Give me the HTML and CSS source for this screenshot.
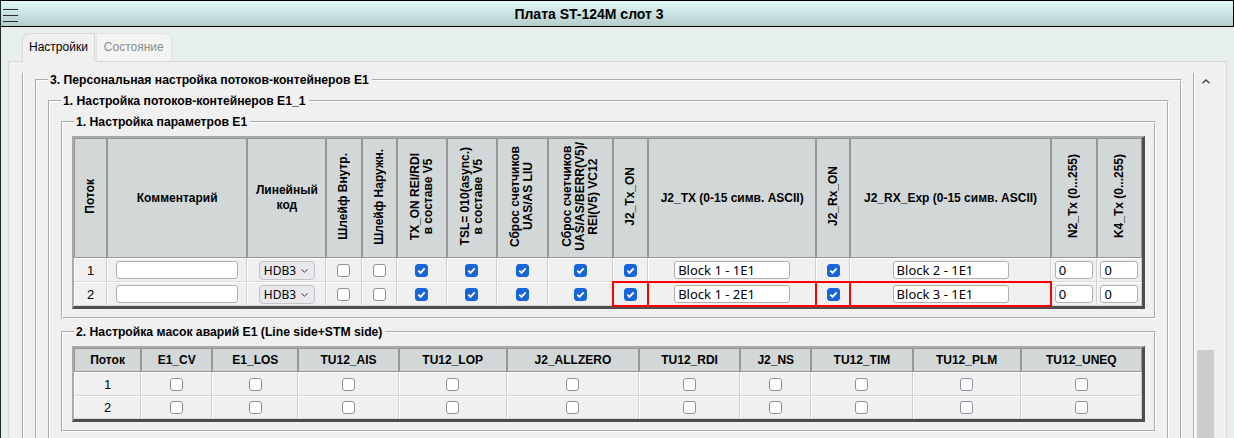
FILE: index.html
```html
<!DOCTYPE html>
<html lang="ru">
<head>
    <meta charset="UTF-8">
    <title>Плата ST-124M слот 3</title>
    <link rel="stylesheet" href="styles.css">
</head>
<body>
    <div class="window">
        <div class="titlebar">
            <svg class="menu" width="19" height="25" viewBox="0 0 19 25">
                <path d="M2 8.5H17M2 14.5H17M2 20.5H17" stroke="#2b2b2b" stroke-width="1.2"/>
            </svg>
            <span class="title">Плата ST-124M слот 3</span>
        </div>

        <div class="tabs">
            <div class="tab active">Настройки</div>
            <div class="tab">Состояние</div>
        </div>

        <div class="panel">
            <div class="scroll">
                <div class="frame">
                    <fieldset>
                        <legend>3. Персональная настройка потоков-контейнеров E1</legend>
                        <fieldset>
                            <legend>1. Настройка потоков-контейнеров E1_1</legend>

                            <fieldset>
                                <legend>1. Настройка параметров E1</legend>
                                <table class="grid params">
                                    <colgroup>
                                        <col class="c-num"><col class="c-comment"><col class="c-code">
                                        <col class="c-35"><col class="c-35"><col class="c-50"><col class="c-50">
                                        <col class="c-51"><col class="c-65"><col class="c-35"><col class="c-j2tx">
                                        <col class="c-34"><col class="c-j2rx"><col class="c-46"><col class="c-45">
                                    </colgroup>
                                    <thead>
                                        <tr>
                                            <th><span class="vt">Поток</span></th>
                                            <th>Комментарий</th>
                                            <th class="lines">Линейный<br>код</th>
                                            <th><span class="vt">Шлейф Внутр.</span></th>
                                            <th><span class="vt">Шлейф Наружн.</span></th>
                                            <th><span class="vt">TX_ON REI/RDI<br>в составе V5</span></th>
                                            <th><span class="vt">TSL= 010(async.)<br>в составе V5</span></th>
                                            <th><span class="vt">Сброс счетчиков<br>UAS/AS LIU</span></th>
                                            <th><span class="vt">Сброс счетчиков<br>UAS/AS/BERR(V5)/<br>REI(V5) VC12</span></th>
                                            <th><span class="vt">J2_Tx_ON</span></th>
                                            <th>J2_TX (0-15 симв. ASCII)</th>
                                            <th><span class="vt">J2_Rx_ON</span></th>
                                            <th>J2_RX_Exp (0-15 симв. ASCII)</th>
                                            <th><span class="vt">N2_Tx (0...255)</span></th>
                                            <th><span class="vt">K4_Tx (0...255)</span></th>
                                        </tr>
                                    </thead>
                                    <tbody>
                                        <tr>
                                            <td>1</td>
                                            <td><input class="field comment" type="text" value=""></td>
                                            <td><span class="select"><select><option>HDB3</option></select><svg class="chev" width="7" height="4" viewBox="0 0 7 4"><path d="M0.5 0.5L3.5 3.2L6.5 0.5" fill="none" stroke="#333" stroke-width="1"/></svg></span></td>
                                            <td><span class="cb"></span></td>
                                            <td><span class="cb"></span></td>
                                            <td><span class="cb on"><svg width="11" height="11" viewBox="0 0 11 11"><path d="M2.3 5.6L4.5 7.8L8.7 3.3" fill="none" stroke="#fff" stroke-width="1.9"/></svg></span></td>
                                            <td><span class="cb on"><svg width="11" height="11" viewBox="0 0 11 11"><path d="M2.3 5.6L4.5 7.8L8.7 3.3" fill="none" stroke="#fff" stroke-width="1.9"/></svg></span></td>
                                            <td><span class="cb on"><svg width="11" height="11" viewBox="0 0 11 11"><path d="M2.3 5.6L4.5 7.8L8.7 3.3" fill="none" stroke="#fff" stroke-width="1.9"/></svg></span></td>
                                            <td><span class="cb on"><svg width="11" height="11" viewBox="0 0 11 11"><path d="M2.3 5.6L4.5 7.8L8.7 3.3" fill="none" stroke="#fff" stroke-width="1.9"/></svg></span></td>
                                            <td><span class="cb on"><svg width="11" height="11" viewBox="0 0 11 11"><path d="M2.3 5.6L4.5 7.8L8.7 3.3" fill="none" stroke="#fff" stroke-width="1.9"/></svg></span></td>
                                            <td><input class="field trace" type="text" value="Block 1 - 1E1"></td>
                                            <td><span class="cb on"><svg width="11" height="11" viewBox="0 0 11 11"><path d="M2.3 5.6L4.5 7.8L8.7 3.3" fill="none" stroke="#fff" stroke-width="1.9"/></svg></span></td>
                                            <td><input class="field trace" type="text" value="Block 2 - 1E1"></td>
                                            <td><input class="field byte" type="text" value="0"></td>
                                            <td><input class="field byte" type="text" value="0"></td>
                                        </tr>
                                        <tr>
                                            <td>2</td>
                                            <td><input class="field comment" type="text" value=""></td>
                                            <td><span class="select"><select><option>HDB3</option></select><svg class="chev" width="7" height="4" viewBox="0 0 7 4"><path d="M0.5 0.5L3.5 3.2L6.5 0.5" fill="none" stroke="#333" stroke-width="1"/></svg></span></td>
                                            <td><span class="cb"></span></td>
                                            <td><span class="cb"></span></td>
                                            <td><span class="cb on"><svg width="11" height="11" viewBox="0 0 11 11"><path d="M2.3 5.6L4.5 7.8L8.7 3.3" fill="none" stroke="#fff" stroke-width="1.9"/></svg></span></td>
                                            <td><span class="cb on"><svg width="11" height="11" viewBox="0 0 11 11"><path d="M2.3 5.6L4.5 7.8L8.7 3.3" fill="none" stroke="#fff" stroke-width="1.9"/></svg></span></td>
                                            <td><span class="cb on"><svg width="11" height="11" viewBox="0 0 11 11"><path d="M2.3 5.6L4.5 7.8L8.7 3.3" fill="none" stroke="#fff" stroke-width="1.9"/></svg></span></td>
                                            <td><span class="cb on"><svg width="11" height="11" viewBox="0 0 11 11"><path d="M2.3 5.6L4.5 7.8L8.7 3.3" fill="none" stroke="#fff" stroke-width="1.9"/></svg></span></td>
                                            <td class="alert"><span class="cb on"><svg width="11" height="11" viewBox="0 0 11 11"><path d="M2.3 5.6L4.5 7.8L8.7 3.3" fill="none" stroke="#fff" stroke-width="1.9"/></svg></span></td>
                                            <td class="alert"><input class="field trace" type="text" value="Block 1 - 2E1"></td>
                                            <td class="alert"><span class="cb on"><svg width="11" height="11" viewBox="0 0 11 11"><path d="M2.3 5.6L4.5 7.8L8.7 3.3" fill="none" stroke="#fff" stroke-width="1.9"/></svg></span></td>
                                            <td class="alert"><input class="field trace" type="text" value="Block 3 - 1E1"></td>
                                            <td><input class="field byte" type="text" value="0"></td>
                                            <td><input class="field byte" type="text" value="0"></td>
                                        </tr>
                                    </tbody>
                                </table>
                            </fieldset>

                            <fieldset class="masks">
                                <legend>2. Настройка масок аварий E1 (Line side+STM side)</legend>
                                <table class="grid alarms">
                                    <colgroup>
                                        <col class="a-num"><col class="a-71"><col class="a-86"><col class="a-100">
                                        <col class="a-108"><col class="a-132"><col class="a-101"><col class="a-71">
                                        <col class="a-101"><col class="a-108"><col class="a-121">
                                    </colgroup>
                                    <thead>
                                        <tr>
                                            <th>Поток</th>
                                            <th>E1_CV</th>
                                            <th>E1_LOS</th>
                                            <th>TU12_AIS</th>
                                            <th>TU12_LOP</th>
                                            <th>J2_ALLZERO</th>
                                            <th>TU12_RDI</th>
                                            <th>J2_NS</th>
                                            <th>TU12_TIM</th>
                                            <th>TU12_PLM</th>
                                            <th>TU12_UNEQ</th>
                                        </tr>
                                    </thead>
                                    <tbody>
                                        <tr>
                                            <td>1</td>
                                            <td><span class="cb"></span></td>
                                            <td><span class="cb"></span></td>
                                            <td><span class="cb"></span></td>
                                            <td><span class="cb"></span></td>
                                            <td><span class="cb"></span></td>
                                            <td><span class="cb"></span></td>
                                            <td><span class="cb"></span></td>
                                            <td><span class="cb"></span></td>
                                            <td><span class="cb"></span></td>
                                            <td><span class="cb"></span></td>
                                        </tr>
                                        <tr class="short">
                                            <td>2</td>
                                            <td><span class="cb"></span></td>
                                            <td><span class="cb"></span></td>
                                            <td><span class="cb"></span></td>
                                            <td><span class="cb"></span></td>
                                            <td><span class="cb"></span></td>
                                            <td><span class="cb"></span></td>
                                            <td><span class="cb"></span></td>
                                            <td><span class="cb"></span></td>
                                            <td><span class="cb"></span></td>
                                            <td><span class="cb"></span></td>
                                        </tr>
                                    </tbody>
                                </table>
                            </fieldset>
                        </fieldset>
                    </fieldset>
                </div>

                <div class="scrollbar">
                    <svg class="up" width="18" height="5" viewBox="0 0 18 5">
                        <path d="M5.5 4.3L9 1L12.5 4.3" fill="none" stroke="#444" stroke-width="1.4"/>
                    </svg>
                    <div class="thumb"></div>
                </div>
            </div>
        </div>
    </div>
</body>
</html>
```

FILE: styles.css
```css
* {
    box-sizing: border-box;
}
body {
    margin: 0;
    font-family: "Liberation Sans", Arial, sans-serif;
    font-size: 12px;
    color: #000;
    background: #e7efed;
    overflow: hidden;
}
.window {
    height: 438px;
    border-left: 1px solid #1d2a2a;
    display: flex;
    flex-direction: column;
}

/* title bar */
.titlebar {
    height: 27px;
    flex: none;
    display: flex;
    align-items: center;
    border-top: 1px solid #000;
    border-bottom: 1px solid #000;
    border-right: 1px solid #000;
    background: linear-gradient(#e1f8f8, #b5cccc);
}
.menu {
    display: block;
    flex: none;
}
.title {
    flex: 1;
    text-align: center;
    font-weight: bold;
    font-size: 14px;
    padding-right: 75px;
}

/* tabs */
.tabs {
    height: 34px;
    flex: none;
    display: flex;
    padding: 6px 0 0 21px;
}
.tab {
    height: 28px;
    line-height: 27px;
    padding: 0 7px;
    border: 1px solid #e2e2e2;
    border-bottom: none;
    border-radius: 0 8px 0 0;
    background: #f4f4f4;
    color: #8c8c8c;
    margin-left: 1px;
}
.tab.active {
    padding: 0 6px;
    margin-left: 0;
    border-color: #d8d8d8;
    border-radius: 8px 0 0 0;
    background: #f0f0f0;
    color: #000;
    position: relative;
    z-index: 1;
    height: 29px;
    margin-bottom: -1px;
}

/* panel with scroll area */
.panel {
    flex: 1;
    min-height: 0;
    margin: 0 7px;
    padding: 11px 11px 0 11px;
    border: 1px solid #d8d8d8;
    border-bottom: none;
    background: #f0f0f0;
}
.scroll {
    height: 100%;
    display: flex;
    overflow: hidden;
}
.frame {
    flex: 1;
    margin: 0 2px;
    padding: 0 9px;
    border-left: 2px groove #fff;
    border-right: 2px groove #fff;
}
.scrollbar {
    width: 18px;
    flex: none;
}
.up {
    display: block;
    margin-top: 6px;
}
.thumb {
    width: 17px;
    height: 120px;
    margin-top: 266px;
    background: #cdcdcd;
}

fieldset {
    margin: 0 2px;
    padding: 7px 9px 8px;
    border: 2px groove #fff;
    min-width: 0;
}
legend {
    margin-left: 2px;
    padding: 0 3px 0 2px;
    font-weight: bold;
    font-size: 12.2px;
    line-height: 14px;
}
.masks {
    margin-top: 6px;
}

/* tables */
.grid {
    width: 100%;
    table-layout: fixed;
    border-collapse: separate;
    border-spacing: 0;
    border-top: 2px solid #a9a9a9;
    border-left: 2px solid #a9a9a9;
    border-right: 3px solid #4e4e4e;
    border-bottom: 3px solid #4e4e4e;
}
.grid th {
    padding: 0;
    background: #d2d8d8;
    border: 1px solid #979797;
    font-weight: bold;
    text-align: center;
    vertical-align: middle;
}
.grid td {
    padding: 0;
    height: 24px;
    background: #f0f0f0;
    border-top: 1px solid #fff;
    border-left: 1px solid #fff;
    border-right: 1px solid #cfcfcf;
    border-bottom: 1px solid #d8d8d8;
    text-align: center;
    vertical-align: middle;
    font-size: 13px;
}
.params th {
    height: 120px;
}
.lines {
    line-height: 15px;
}
.alarms th {
    height: 24px;
}
.alarms .short td {
    height: 23px;
}
.grid td.alert {
    outline: 2px solid #f00;
    outline-offset: -1px;
}

.vt {
    display: inline-block;
    writing-mode: vertical-rl;
    transform: rotate(180deg);
    line-height: 13px;
    text-align: center;
    white-space: nowrap;
}

.c-num { width: 33px; }
.c-comment { width: 140px; }
.c-code { width: 79px; }
.c-35 { width: 35px; }
.c-34 { width: 34px; }
.c-50 { width: 50px; }
.c-51 { width: 51px; }
.c-65 { width: 65px; }
.c-46 { width: 46px; }
.c-45 { width: 45px; }
.c-j2tx { width: 168px; }
.c-j2rx { width: 200px; }

.a-num { width: 67px; }
.a-71 { width: 71px; }
.a-86 { width: 86px; }
.a-100 { width: 100px; }
.a-101 { width: 101px; }
.a-108 { width: 108px; }
.a-121 { width: 121px; }
.a-132 { width: 132px; }

/* controls */
.cb {
    display: block;
    margin: 0 auto;
    width: 13px;
    height: 13px;
    border: 1px solid #8f8f9d;
    border-radius: 3px;
    background: #fff;
}
.cb.on {
    background: #1766d9;
    border-color: #1766d9;
}
.cb svg {
    display: block;
}
.field {
    display: block;
    margin: 0 auto;
    height: 18px;
    padding: 0 3px;
    border: 1px solid #b0b0b0;
    border-radius: 3px;
    background: #fff;
    font-family: "Noto Sans", sans-serif;
    font-size: 13px;
    line-height: 16px;
    color: #000;
}
.comment { width: 122px; }
.trace { width: 116px; }
.byte { width: 38px; }
.select {
    position: relative;
    display: block;
    width: 56px;
    height: 19px;
    margin: 0 auto;
}
.select select {
    appearance: none;
    width: 56px;
    height: 19px;
    padding: 0 0 0 4px;
    border: 1px solid #c2c2c8;
    border-radius: 4px;
    background: #e9e9ed;
    font-family: "Noto Sans", sans-serif;
    font-size: 12px;
    line-height: 17px;
    color: #000;
}
.chev {
    position: absolute;
    right: 7px;
    top: 8px;
}
```
